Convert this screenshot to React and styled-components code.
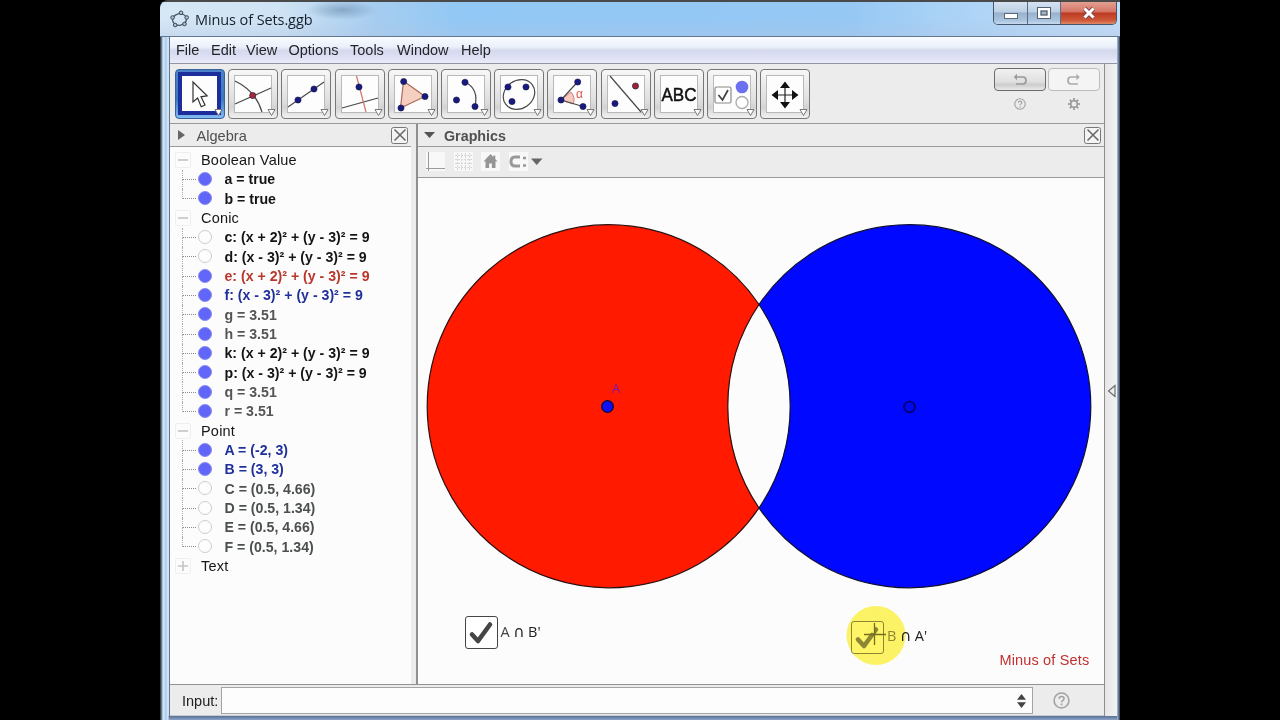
import React from 'react';
import styled, { createGlobalStyle, css } from 'styled-components';

const Global = createGlobalStyle`
  * { box-sizing: border-box; }
  body { margin: 0; background: #000; overflow: hidden; font-family: "Liberation Sans", Arial, sans-serif; }
  svg { display: block; }
`;

const Stage = styled.div`
  width: 1280px; height: 720px; background: #000; padding: 0 160px;
  display: flex;
`;
const Frame = styled.div`
  width: 960px; height: 720px; padding: 2px 2px 4px 9px;
  display: flex; flex-direction: column;
  border-radius: 8px 0 0 0;
  background:
    linear-gradient(#4a4a4a, #4a4a4a) 0 0 / 100% 2px no-repeat,
    linear-gradient(90deg, #1c242c 0, #7f97ad 2px, #dcecf8 3px, #b4d2ef 5px, #b4d2ef 7px, #e4f2fc 8px, transparent 9px) 0 36px / 9px 100% no-repeat,
    linear-gradient(90deg, #a8c0dd, #60718a 60%, #303b50) 100% 36px / 3px 100% no-repeat,
    linear-gradient(#5b6f90, #8ba4cb) 0 100% / 100% 4px no-repeat,
    #b4d2ef;
`;
const TitleBar = styled.div`
  height: 35px; margin: 0 -2px 0 -9px; padding-left: 10px;
  display: flex; align-items: center; flex: none;
  border-bottom: 1px solid #627890;
  border-radius: 7px 0 0 0;
  background:
    radial-gradient(ellipse 36px 10px at 182px 8px, rgba(90, 125, 160, .5), transparent),
    linear-gradient(transparent 50%, rgba(175, 195, 225, .35)),
    linear-gradient(90deg, #d6e8f6 0, #cfe3f4 120px, #a6cdf0 215px, #92c8f5 300px, #96c8f4 690px, #a9d2f6 780px, #c4ddf7 100%);
`;
const AppTitle = styled.span`
  font: 14.5px "Open Sans", "Noto Sans", sans-serif; color: #16202c;
  margin-left: 6px; flex: 1; letter-spacing: -0.1px;
`;
const WindowButtons = styled.div`
  display: flex; align-self: flex-start; height: 23px; margin: 0 3px 0 0;
  border: 1px solid #45566c; border-top: 0; border-radius: 0 0 5px 5px; overflow: hidden;
`;
const WindowButton = styled.div`
  width: ${p => p.$w}px; display: flex; align-items: center; justify-content: center;
  border-left: ${p => (p.$first ? 0 : '1px solid #5c6e87')};
  background: ${p => p.$close
    ? 'linear-gradient(#e2a193, #d57566 45%, #bd3a22 50%, #cf5b3a 85%, #e08a68)'
    : 'linear-gradient(#d6e3f1, #bccfe4 45%, #98b1cd 50%, #abc5df 85%, #c6daee)'};
`;

const Client = styled.div`
  flex: 1; min-height: 0; width: 948px; background: #ececec; display: flex; flex-direction: column;
  border-left: 1px solid #65778c;
`;
const MenuBar = styled.div`
  height: 27px; flex: none; display: flex; align-items: center; padding-left: 6px;
  background: linear-gradient(#f9fcff 0, #eaf0fa 38%, #d5d9ee 52%, #dfe1f4 80%, #ebecfa 100%);
  border-bottom: 1px solid #92959f;
`;
const MenuItem = styled.span`
  font-size: 14.5px; color: #252529; width: ${p => p.$w}px; white-space: nowrap;
`;
const Body = styled.div` flex: 1; min-height: 0; display: flex; `;
const Main = styled.div` width: 934px; display: flex; flex-direction: column; `;
const SideStrip = styled.div`
  flex: 1; border-left: 1px solid #8d8d8d; background: linear-gradient(90deg, #e6e6e6, #f2f2f5);
  display: flex; align-items: center; justify-content: flex-end; padding: 2px 1px 0 0;
`;

const Toolbar = styled.div`
  height: 60px; flex: none; border-bottom: 1px solid #999; padding: 5px 4px 0 5px; display: flex; justify-content: space-between;
`;
const Tools = styled.div` display: flex; gap: 3.2px; `;
const Tool = styled.div`
  width: 50px; height: 50px; flex: none; padding: 5px; border-radius: 4px; border: 1.5px solid #777;
  background: linear-gradient(#f7f7f7, #dedede 65%, #d3d3d3 78%, #f2f2f2);
  ${p => p.$active && css`
    border-color: #34639f; padding: 2px;
    background: linear-gradient(#4c83c8, #3d78c3 60%, #82baf0);
  `}
`;
const ToolFace = styled.div`
  width: 38px; height: 38px; background: #fdfdfd; border: 1px solid #b9b9b9; position: relative;
  svg { position: absolute; left: -1px; top: -1px; overflow: visible; }
  ${p => p.$active && css`
    width: 43px; height: 43px; border: 4px solid #1c2e9c;
    svg { left: -1px; top: -1px; }
  `}
`;
const SideTools = styled.div`
  display: grid; grid-template-columns: 52px 52px; grid-template-rows: 23px 26px; column-gap: 2px; justify-items: center; align-items: center;
  height: 50px; margin-top: -1px;
`;
const HistoryButton = styled.div`
  width: 52px; height: 23px; border-radius: 4px; border: 1px solid ${p => (p.$on ? '#6b6b6b' : '#bcbcbc')};
  background: ${p => (p.$on ? 'linear-gradient(#f1f1f1, #e0e0e0 60%, #cdcdcd 75%, #e9e9e9)' : '#f4f4f4')};
  display: flex; align-items: center; justify-content: center;
`;

const Views = styled.div` flex: 1; min-height: 0; display: flex; `;
const AlgebraView = styled.div` width: 241px; display: flex; flex-direction: column; background: #fcfcfc; `;
const Splitter = styled.div` width: 7px; background: #ebebeb; border-right: 2px solid #8f8f8f; `;
const GraphicsView = styled.div` flex: 1; display: flex; flex-direction: column; background: #fcfcfc; `;
const PanelHeader = styled.div`
  height: 23px; flex: none; display: flex; align-items: center; background: #ececec; border-bottom: 1px solid #999;
  padding: 0 3px 0 ${p => p.$pad}px;
`;
const PanelTitle = styled.span`
  flex: 1; font-size: ${p => (p.$bold ? 14.3 : 14.6)}px; font-weight: ${p => (p.$bold ? 700 : 400)}; color: #505050;
  margin-left: ${p => p.$gap}px; padding-top: 1px;
`;
const CloseBox = styled.div`
  width: 17px; height: 17px; border: 1.5px solid #777; border-radius: 2.5px; background: #f4f4f4; display: flex; align-items: center; justify-content: center;
`;

const Tree = styled.div` padding-top: 3.5px; `;
const TreeRow = styled.div` height: 19.34px; display: flex; align-items: center; `;
const Toggle = styled.div`
  width: 16px; height: 16px; margin-left: 4.5px; border: 1px solid #efefef; border-radius: 2px;
  display: flex; align-items: center; justify-content: center;
`;
const GroupLabel = styled.span` font-size: 14.5px; margin-left: 10.5px; color: #161616; letter-spacing: .2px; `;
const Branch = styled.div`
  width: 14px; height: 100%; margin-left: 12px; display: flex; flex-direction: column;
  &::before { content: ''; height: 50%; border-left: 1px dotted #aaa; border-bottom: 1px dotted #8a8a8a; }
  &::after { content: ''; height: 50%; border-left: ${p => (p.$last ? 0 : '1px dotted #aaa')}; }
`;
const Marble = styled.span`
  width: 14px; height: 14px; flex: none; border-radius: 50%; margin: -1px 0 0 2px;
  border: 1.5px solid ${p => (p.$on ? '#8a8cf0' : '#cdcdcd')}; background: ${p => (p.$on ? '#6266f8' : '#fdfdfd')};
`;
const Formula = styled.span`
  font-size: 14.15px; font-weight: 700; color: ${p => p.$c}; margin-left: 12.5px; white-space: nowrap;
`;

const GraphicsBar = styled.div`
  height: 31px; flex: none; display: flex; align-items: center; background: #ececec; border-bottom: 1px solid #999; padding: 0 0 1px 8px; gap: 8.5px;
`;
const BarIcon = styled.div` width: 19px; height: 19px; background: #f8f8f8; `;
const Canvas = styled.div` position: relative; flex: 1; overflow: hidden; `;
const CanvasItem = styled.div`
  position: absolute; left: ${p => p.$x}px; top: ${p => p.$y}px; white-space: nowrap;
`;
const CheckRow = styled.div` display: flex; align-items: center; gap: 3px; `;
const CheckBox = styled.div`
  width: 33px; height: 33px; border: 1.5px solid ${p => p.$tone}; border-radius: 3px; background: #fff;
`;
const SetLabel = styled.span`
  font: 14.5px/20px "Open Sans", sans-serif; color: #222; margin-top: -2px; display: flex; gap: 3.5px;
`;
const Cap = styled.span` font-family: "DejaVu Sans", sans-serif; font-size: 15.5px; `;
const Letter = styled.span` color: ${p => p.$tone}; `;
const Halo = styled(CanvasItem)` mix-blend-mode: multiply; `;
const Caption = styled.span` font-size: 14.5px; color: #c23030; letter-spacing: .15px; `;

const InputBar = styled.div`
  height: 32px; flex: none; border-top: 1px solid #929292; display: flex; align-items: center; padding: 1px 0 0 12px; color: #222;
  border-bottom: 1px solid #c4cbd3;
`;
const InputLabel = styled.span` font-size: 14.5px; width: 39px; `;
const InputField = styled.div`
  width: 812px; height: 27px; border: 1px solid #a4a4a4; background: #fdfdfd; display: flex; align-items: center; justify-content: flex-end; padding-right: 6px;
`;
const HelpSlot = styled.div` margin-left: 20px; `;

const NAVY = '#171a80';
const Dot = ({ x, y, c = NAVY }) => <circle cx={x} cy={y} r="3.1" fill={c} stroke="#1a1440" strokeWidth=".6" />;
const line = { stroke: '#484848', strokeWidth: 1.2, fill: 'none' };

const icons = [
  <path d="M12 7v20l4.6-3.9 3.6 8.7 3.8-1.8-4-8.2 6.1-.9z" fill="#fff" stroke="#333" strokeWidth="1.2" />,
  <g><path d="M1 6Q22 16 28 37M1 29L37 13" {...line} /><Dot x={18.7} y={20.5} c="#a02a36" /></g>,
  <g><path d="M1 32L37 7" {...line} /><Dot x={11} y={25} /><Dot x={27} y={14} /></g>,
  <g><path d="M1 33L37 23" {...line} /><path d="M15.5 1L25 37" stroke="#cf7668" strokeWidth="1.2" /><Dot x={18} y={12} /></g>,
  <g><path d="M9.5 6L31 21.5 6.5 33z" fill="#f5cfc0" stroke="#aa6b59" strokeWidth="1.2" /><Dot x={9.7} y={6.5} /><Dot x={31} y={21.5} /><Dot x={7} y={33} /></g>,
  <g><path d="M18 7Q32 14 28 31" {...line} /><Dot x={18} y={7.3} /><Dot x={9.5} y={25} /><Dot x={28} y={31.5} /></g>,
  <g><ellipse cx="19" cy="19.5" rx="16.5" ry="14" transform="rotate(-35 19 19.5)" {...line} /><Dot x={8} y={12} /><Dot x={26} y={12} /><Dot x={12} y={26.5} /></g>,
  <g><path d="M8 25L18 17Q23 23 20 29z" fill="#f6c9c1" stroke="#c66" strokeWidth=".8" /><path d="M24.5 7L8 25 30 31.5" {...line} /><Dot x={24.7} y={7} /><Dot x={8} y={25} /><Dot x={30} y={31.5} /><text x="23" y="23" fontSize="12" fontFamily="Liberation Sans" fill="#dd5a4e">α</text></g>,
  <g><path d="M3 1L34 37" {...line} /><Dot x={28.5} y={11} c="#9d2433" /><Dot x={8} y={28.5} /></g>,
  <text x="1.5" y="26" fontSize="18" textLength="35" lengthAdjust="spacingAndGlyphs" fontFamily="Liberation Sans" stroke="#111" strokeWidth=".5" fill="#111">ABC</text>,
  <g><rect x="2" y="12" width="16" height="16" rx="1.5" fill="#fff" stroke="#8a8a8a" strokeWidth="1.2" /><path d="M5.5 20l4 5 5.5-10" fill="none" stroke="#444" strokeWidth="1.8" /><circle cx="29" cy="12" r="6.3" fill="#6b70ef" /><circle cx="29" cy="27.5" r="6" fill="#fff" stroke="#aaa" strokeWidth="1.3" /></g>,
  <g fill="#111"><path d="M19 11v18M10 20h18" {...line} stroke="#222" /><path d="M19 6.5l5 6.5H14zM19 33.5l5-6.5H14zM5.5 20l6.5-5v10zM32.500 20L26 15v10z" /></g>,
];

const TreeData = [
  { group: 'Boolean Value' },
  { t: 'a = true', on: 1 }, { t: 'b = true', on: 1, last: 1 },
  { group: 'Conic' },
  { t: 'c: (x + 2)² + (y - 3)² = 9' }, { t: 'd: (x - 3)² + (y - 3)² = 9' },
  { t: 'e: (x + 2)² + (y - 3)² = 9', on: 1, c: '#b8362b' }, { t: 'f: (x - 3)² + (y - 3)² = 9', on: 1, c: '#20309a' },
  { t: 'g = 3.51', on: 1, c: '#555' }, { t: 'h = 3.51', on: 1, c: '#555' },
  { t: 'k: (x + 2)² + (y - 3)² = 9', on: 1 }, { t: 'p: (x - 3)² + (y - 3)² = 9', on: 1 },
  { t: 'q = 3.51', on: 1, c: '#555' }, { t: 'r = 3.51', on: 1, c: '#555', last: 1 },
  { group: 'Point' },
  { t: 'A = (-2, 3)', on: 1, c: '#20309a' }, { t: 'B = (3, 3)', on: 1, c: '#20309a' },
  { t: 'C = (0.5, 4.66)', c: '#4c4f4f' }, { t: 'D = (0.5, 1.34)', c: '#4c4f4f' },
  { t: 'E = (0.5, 4.66)', c: '#4c4f4f' }, { t: 'F = (0.5, 1.34)', c: '#4c4f4f', last: 1 },
  { group: 'Text', closed: 1 },
];

const Close = () => (
  <CloseBox><svg width="14" height="14"><path d="M1.5 1.5l11 11M12.5 1.5l-11 11" stroke="#666" strokeWidth="1.5" /></svg></CloseBox>
);
const Help = ({ size }) => (
  <svg width={size} height={size} viewBox="0 0 16 16" fill="none" stroke="#a2a2a2" strokeWidth="1.5">
    <circle cx="8" cy="8" r="7" /><path d="M5.8 6.4c0-3 4.6-2.8 4.6-.2 0 1.6-2.3 1.6-2.3 3.4M8.1 10.9v1.6" />
  </svg>
);
const SetToggle = ({ first, second, tone }) => (
  <CheckRow>
    <CheckBox $tone={tone}>
      <svg width="30" height="30"><path d="M6 17.500l6 6.500L24 7.500" fill="none" stroke={tone} strokeWidth="4.6" strokeLinecap="round" strokeLinejoin="round" /></svg>
    </CheckBox>
    <SetLabel><Letter $tone={tone}>{first}</Letter><Cap>∩</Cap><span>{second}</span></SetLabel>
  </CheckRow>
);

export default function App() {
  const menus = [['File', 35], ['Edit', 35], ['View', 42.5], ['Options', 61.5], ['Tools', 47], ['Window', 64], ['Help', 40]];
  return (
    <Stage>
      <Global />
      <Frame>
        <TitleBar>
          <svg width="19" height="18" viewBox="0 0 19 18">
            <ellipse cx="9.5" cy="9.5" rx="7" ry="5.8" transform="rotate(-12 9.5 9.5)" fill="none" stroke="#4a5865" strokeWidth="1.3" />
            {[[2.6, 7.5], [11, 2.8], [16.7, 7.5], [14.5, 14], [5.2, 15]].map(([x, y]) => <circle key={x} cx={x} cy={y} r="1.8" fill="#aec3d6" stroke="#3b4854" />)}
          </svg>
          <AppTitle>Minus of Sets.ggb</AppTitle>
          <WindowButtons>
            <WindowButton $w={33} $first><svg width="16" height="16"><rect x="1.5" y="8.5" width="13" height="5" fill="#fff" stroke="#5c6a7c" /></svg></WindowButton>
            <WindowButton $w={33}><svg width="16" height="16"><rect x="1.5" y="2.5" width="13" height="11" fill="#fff" stroke="#53606f" /><rect x="5" y="6" width="6" height="4" fill="#a5b9cc" stroke="#53606f" strokeWidth="1.3" /></svg></WindowButton>
            <WindowButton $w={56} $close><svg width="16" height="14"><path d="M3.5 2.5l9 9M12.5 2.5l-9 9" stroke="#7a4340" strokeWidth="4.6" /><path d="M3.5 2.5l9 9M12.5 2.5l-9 9" stroke="#fff" strokeWidth="3" /></svg></WindowButton>
          </WindowButtons>
        </TitleBar>
        <Client>
          <MenuBar>{menus.map(([t, w]) => <MenuItem key={t} $w={w}>{t}</MenuItem>)}</MenuBar>
          <Body>
            <Main>
              <Toolbar>
                <Tools>
                  {icons.map((icon, i) => (
                    <Tool key={i} $active={i === 0}>
                      <ToolFace $active={i === 0}>
                        <svg width="38" height="38">{icon}<path d="M34 34.5h7l-3.5 6z" fill="#fff" stroke="#777" strokeWidth="1" /></svg>
                      </ToolFace>
                    </Tool>
                  ))}
                </Tools>
                <SideTools>
                  <HistoryButton $on><svg width="16" height="14" fill="none" stroke="#999" strokeWidth="1.7"><path d="M4 4h7q3 0 3 3.5T11 11H4" /><path d="M5 .8L1.8 4 5 7.2z" fill="#999" strokeWidth="0" /></svg></HistoryButton>
                  <HistoryButton><svg width="16" height="14" fill="none" stroke="#aaa" strokeWidth="1.7"><path d="M11 4H5Q2 4 2 7.5T5 11h7" /><path d="M10.5 .8L13.7 4l-3.2 3.2z" fill="#aaa" strokeWidth="0" /></svg></HistoryButton>
                  <Help size={12} />
                  <svg width="14" height="14" viewBox="-7 -7 14 14" stroke="#999" fill="none"><circle r="3.3" strokeWidth="1.6" />
                    {[0, 45, 90, 135, 180, 225, 270, 315].map(a => <path key={a} d="M0-3.6V-6" strokeWidth="1.7" transform={`rotate(${a})`} />)}
                  </svg>
                </SideTools>
              </Toolbar>
              <Views>
                <AlgebraView>
                  <PanelHeader $pad={7}>
                    <svg width="9" height="12"><path d="M1 1l7 5-7 5z" fill="#666" /></svg>
                    <PanelTitle $gap={10.5}>Algebra</PanelTitle><Close />
                  </PanelHeader>
                  <Tree>
                    {TreeData.map((r, i) => r.group ? (
                      <TreeRow key={i}>
                        <Toggle><svg width="10" height="10"><path d={r.closed ? 'M0 5h10M5 0v10' : 'M0 5h10'} stroke="#c4c4c4" strokeWidth="1.6" /></svg></Toggle>
                        <GroupLabel>{r.group}</GroupLabel>
                      </TreeRow>
                    ) : (
                      <TreeRow key={i}>
                        <Branch $last={r.last} /><Marble $on={r.on} />
                        <Formula $c={r.c || '#141414'}>{r.t}</Formula>
                      </TreeRow>
                    ))}
                  </Tree>
                </AlgebraView>
                <Splitter />
                <GraphicsView>
                  <PanelHeader $pad={6}>
                    <svg width="11" height="8"><path d="M0 1h11L5.5 7z" fill="#555" /></svg>
                    <PanelTitle $bold $gap={9}>Graphics</PanelTitle><Close />
                  </PanelHeader>
                  <GraphicsBar>
                    <BarIcon><svg width="19" height="19"><path d="M2.5 0v19M0 16.5h19" stroke="#9a9a9a" /></svg></BarIcon>
                    <BarIcon><svg width="19" height="19"><path d="M3.5 1v17M7.5 1v17M11.5 1v17M15.5 1v17M1 3.5h17M1 7.5h17M1 11.5h17M1 15.5h17" stroke="#d8d8d8" strokeDasharray="2 1" /></svg></BarIcon>
                    <BarIcon><svg width="19" height="19"><path d="M9.5 2L2.5 9.5h2V16h3.6v-4.5h2.8V16h3.6V9.5h2L14.3 7V3.5h-2V5z" fill="#959595" /></svg></BarIcon>
                    <BarIcon><svg width="38" height="19" style={{ overflow: 'visible' }}><path d="M11 5H6Q2 5 2 9.5T6 14H11" fill="none" stroke="#999" strokeWidth="3" /><path d="M14 6h3M14 13.5h3" stroke="#999" strokeWidth="2.4" /><path d="M22 6.5h11.500L27.700 13z" fill="#666" /></svg></BarIcon>
                  </GraphicsBar>
                  <Canvas>
                    <svg width="686" height="507" viewBox="418 178 686 507">
                      <path d="M759 304.500A181.500 181.500 0 1 0 759 508A181.500 181.500 0 0 1 759 304.500z" fill="#ff1a00" stroke="#2b1010" strokeWidth="1.2" />
                      <path d="M759 304.500A181.500 181.500 0 1 1 759 508A181.500 181.500 0 0 0 759 304.500z" fill="#0008ff" stroke="#101030" strokeWidth="1.2" />
                      <circle cx="607.5" cy="406.5" r="5.8" fill="#1010f5" stroke="#0a0a40" strokeWidth="1.3" />
                      <circle cx="909.5" cy="407" r="5.5" fill="#0008ee" stroke="#000060" strokeWidth="1.5" />
                      <text x="612" y="392.500" fontSize="13" fontFamily="Open Sans" fill="#7a14b4">A</text>
                    </svg>
                    <CanvasItem $x={46.5} $y={438}><SetToggle first="A" second="B'" tone="#454545" /></CanvasItem>
                    <CanvasItem $x={433} $y={442.5}><SetToggle first="B" second="A'" tone="#8d8d80" /></CanvasItem>
                    <Halo $x={427} $y={427}><svg width="62" height="62"><circle cx="31" cy="30.500" r="29.500" fill="#fff566" /></svg></Halo>
                    <CanvasItem $x={427} $y={427}>
                      <svg width="62" height="62"><path d="M21 27l8-10v11z" fill="#fdf36a" /><path d="M29.5 18v22M19 29.5h22" stroke="#75701f" strokeWidth="1.3" /></svg>
                    </CanvasItem>
                    <CanvasItem $x={581.5} $y={473}><Caption>Minus of Sets</Caption></CanvasItem>
                  </Canvas>
                </GraphicsView>
              </Views>
              <InputBar>
                <InputLabel>Input:</InputLabel>
                <InputField><svg width="9" height="14"><path d="M0 5.8L4.5 0 9 5.8zM0 8.2L4.5 14 9 8.2z" fill="#444" /></svg></InputField>
                <HelpSlot><Help size={17} /></HelpSlot>
              </InputBar>
            </Main>
            <SideStrip><svg width="9" height="14"><path d="M8 1.5v11L1.5 7z" fill="none" stroke="#666" strokeWidth="1.1" /></svg></SideStrip>
          </Body>
        </Client>
      </Frame>
    </Stage>
  );
}
